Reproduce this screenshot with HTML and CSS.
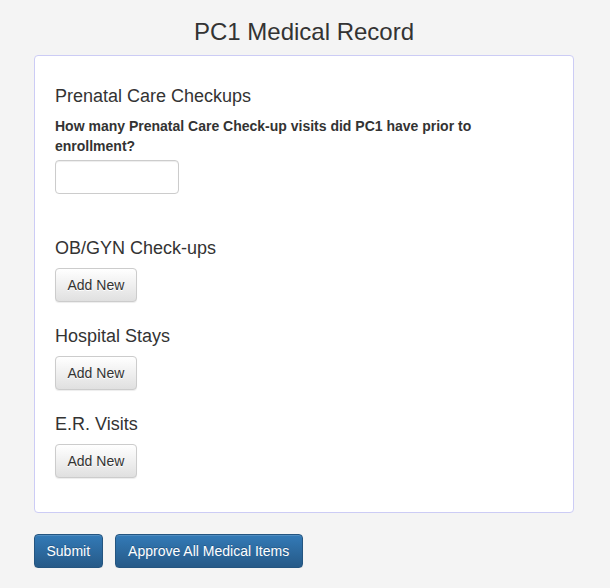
FILE: index.html
```html
<!DOCTYPE html>
<html>
<head>
<meta charset="utf-8">
<link rel="stylesheet" href="styles.css">
</head>
<body>
<div class="page">
  <h2 class="title">PC1 Medical Record</h2>
  <div class="panel">
    <div class="section first">
      <h4 class="heading">Prenatal Care Checkups</h4>
      <label class="label" for="visits">How many Prenatal Care Check-up visits did PC1 have prior to enrollment?</label>
      <input class="input" id="visits" type="text">
    </div>
    <div class="section">
      <h4 class="heading">OB/GYN Check-ups</h4>
      <button class="btn btn-default">Add New</button>
    </div>
    <div class="section">
      <h4 class="heading">Hospital Stays</h4>
      <button class="btn btn-default">Add New</button>
    </div>
    <div class="section">
      <h4 class="heading">E.R. Visits</h4>
      <button class="btn btn-default">Add New</button>
    </div>
  </div>
  <div class="actions">
    <button class="btn btn-primary">Submit</button>
    <button class="btn btn-primary btn-wide">Approve All Medical Items</button>
  </div>
</div>
</body>
</html>
```

FILE: styles.css
```css
html, body {
  margin: 0;
  padding: 0;
  background: #f4f4f4;
}
body {
  font-family: "Liberation Sans", Arial, Helvetica, sans-serif;
  font-size: 14px;
  line-height: 1.42857;
  color: #333;
}
.page {
  width: 540px;
  margin-left: 34px;
}
.title {
  margin: 19px 0 10px;
  font-size: 24px;
  font-weight: 500;
  line-height: 26px;
  text-align: center;
  color: #333;
}
.panel {
  background: #fff;
  border: 1px solid #ccccf5;
  border-radius: 4px;
  padding: 20px 20px 35px;
  box-sizing: border-box;
  height: 458px;
}
.section {
  display: flex;
  flex-direction: column;
  align-items: flex-start;
  margin-bottom: 14px;
}
.section.first {
  margin-bottom: 34px;
}
.heading {
  margin: 10px 0 10px;
  font-size: 18px;
  font-weight: 500;
  line-height: 20px;
}
.label {
  display: block;
  font-weight: bold;
  line-height: 20px;
  margin-bottom: 4px;
}
.input {
  width: 124px;
  height: 34px;
  box-sizing: border-box;
  border: 1px solid #ccc;
  border-radius: 4px;
  padding: 6px 12px;
  font: inherit;
  box-shadow: inset 0 1px 1px rgba(0,0,0,.075);
  background: #fff;
}
.btn {
  display: inline-block;
  box-sizing: border-box;
  height: 34px;
  padding: 6px 11.5px;
  font-family: inherit;
  font-size: 14px;
  line-height: 20px;
  border: 1px solid transparent;
  border-radius: 4px;
  cursor: pointer;
  box-shadow: inset 0 1px 0 rgba(255,255,255,.15), 0 1px 1px rgba(0,0,0,.075);
}
.btn-wide {
  padding: 6px 12.5px;
}
.btn-default {
  color: #333;
  background-image: linear-gradient(to bottom, #fff 0, #e0e0e0 100%);
  border-color: #ccc;
  text-shadow: 0 1px 0 #fff;
}
.btn-primary {
  color: #fff;
  background-image: linear-gradient(to bottom, #337ab7 0, #265a88 100%);
  border-color: #245580;
  text-shadow: 0 -1px 0 rgba(0,0,0,.2);
}
.actions {
  display: flex;
  gap: 12px;
  margin-top: 21px;
}
```
